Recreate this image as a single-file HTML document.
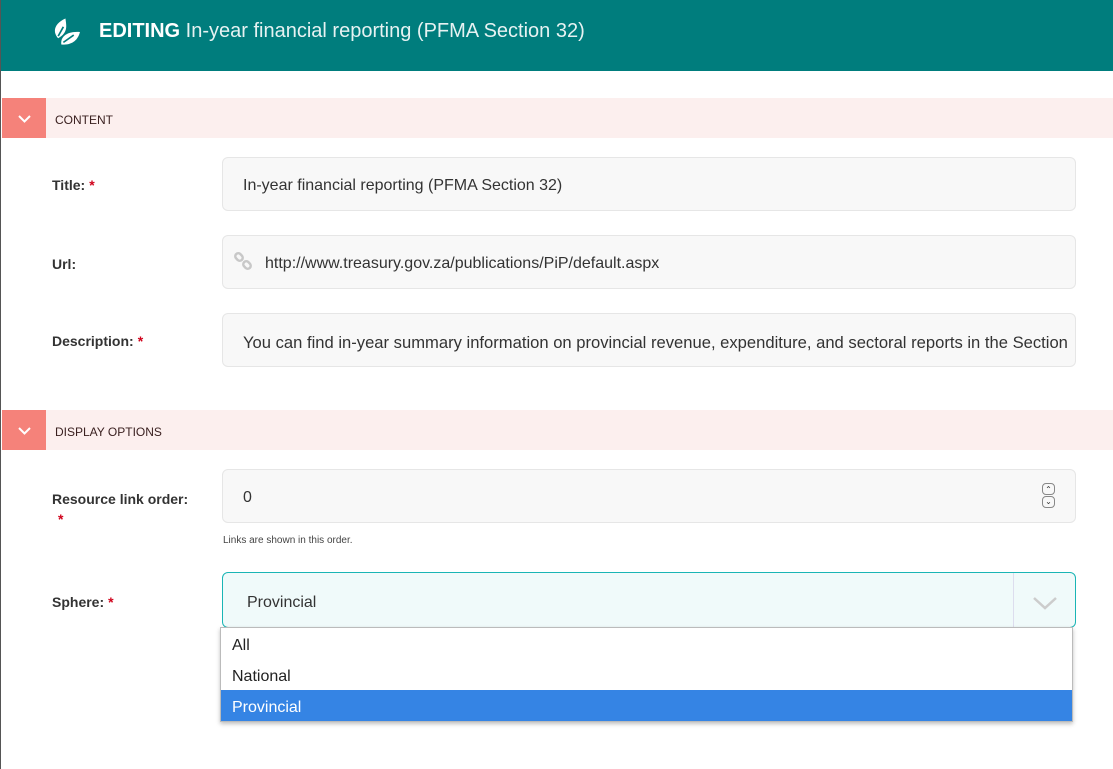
<!DOCTYPE html>
<html><head><style>
*{box-sizing:border-box;margin:0;padding:0}
body{width:1113px;height:769px;background:#fff;font-family:"Liberation Sans",sans-serif;position:relative;overflow:hidden}
.edge{position:absolute;left:0;top:0;width:1px;height:769px;background:#555}
.hdr{position:absolute;left:1px;top:0;width:1112px;height:71px;background:#007d7d;color:#fff}
.hdr .t{position:absolute;left:98px;top:20px;font-size:20px;color:#e6f2f2}
.hdr b{color:#fff}
.bar{position:absolute;left:2px;width:1111px;height:40px;background:#fcefee;font-size:12px;color:#3a2020}
.bar .c{position:absolute;left:0;top:0;width:44px;height:40px;background:#f5827a}
.bar span{position:absolute;left:53px;top:15px}
.lbl{position:absolute;left:52px;font-size:14px;font-weight:bold;color:#333}
.lbl i{color:#d0021b;font-style:normal;margin-left:4px}
.in{position:absolute;left:222px;width:854px;height:54px;background:#f8f8f8;border:1px solid #e6e6e6;border-radius:6px;font-size:16px;color:#333;padding:19px 0 0 20px;white-space:nowrap;overflow:hidden}
.dd{position:absolute;left:220px;top:627px;width:853px;height:95px;background:#fff;border:1px solid #bbb;box-shadow:0 2px 4px rgba(0,0,0,.25);font-size:16px;color:#222}
.dd div{height:31px;padding:9px 11px 0}
</style></head><body>
<div class="edge"></div>
<div class="hdr">
<svg style="position:absolute;left:52px;top:18px" width="28" height="28" viewBox="0 0 27 26"><path d="M4 18C-1 11 3 4 12 0C13 7 14 12 8 17L5 19Z" fill="#fff"/><path d="M8 25C7 18 13 12 26 13C24 21 18 26 8 25Z" fill="#fff"/><path d="M10 23L20 16" stroke="#007d7d" stroke-width="1.6"/><path d="M5 17L10 8" stroke="#007d7d" stroke-width="1.6"/></svg>
<div class="t"><b>EDITING</b> In-year financial reporting (PFMA Section 32)</div></div>
<div class="bar" style="top:98px"><div class="c"><svg style="position:absolute;left:16px;top:17px" width="13" height="8"><path d="M1 1L6.5 6.5L12 1" stroke="#fff" stroke-width="2" fill="none"/></svg></div><span>CONTENT</span></div>
<div class="lbl" style="top:177px">Title:<i>*</i></div>
<div class="in" style="top:157px">In-year financial reporting (PFMA Section 32)</div>
<div class="lbl" style="top:256px">Url:</div>
<div class="in" style="top:235px;padding-left:42px">http://www.treasury.gov.za/publications/PiP/default.aspx
<svg style="position:absolute;left:10px;top:16px" width="22" height="22" viewBox="0 0 22 22"><rect x="2" y="2" width="8" height="6" rx="3" transform="rotate(45 6 5)" fill="none" stroke="#c8c8c8" stroke-width="2.5"/><rect x="10" y="10" width="8" height="6" rx="3" transform="rotate(45 14 13)" fill="none" stroke="#c8c8c8" stroke-width="2.5"/></svg></div>
<div class="lbl" style="top:333px">Description:<i>*</i></div>
<div class="in" style="top:313px;font-size:16.6px">You can find in-year summary information on provincial revenue, expenditure, and sectoral reports in the Section</div>
<div class="bar" style="top:410px"><div class="c"><svg style="position:absolute;left:16px;top:17px" width="13" height="8"><path d="M1 1L6.5 6.5L12 1" stroke="#fff" stroke-width="2" fill="none"/></svg></div><span>DISPLAY OPTIONS</span></div>
<div class="lbl" style="top:489px;line-height:20px">Resource link order:<br><i style="margin-left:6px">*</i></div>
<div class="in" style="top:469px">0
<div style="position:absolute;left:819px;top:13px;width:13px;height:12px;border:1px solid #888;border-radius:4px;font-size:8px;text-align:center;line-height:11px">&#8963;</div>
<div style="position:absolute;left:819px;top:26px;width:13px;height:12px;border:1px solid #888;border-radius:4px;font-size:8px;text-align:center;line-height:9px">&#8964;</div></div>
<div style="position:absolute;left:223px;top:535px;font-size:10px;color:#444">Links are shown in this order.</div>
<div class="lbl" style="top:594px">Sphere:<i>*</i></div>
<div class="in" style="top:572px;height:56px;background:#f0fafa;border-color:#1ab5b5;padding:21px 0 0 24px">Provincial
<div style="position:absolute;left:790px;top:0;width:1px;height:56px;background:#dde"></div>
<svg style="position:absolute;left:809px;top:23px" width="26" height="14"><path d="M2 2L13 12L24 2" stroke="#ccc" stroke-width="2.5" fill="none"/></svg></div>
<div class="dd"><div>All</div><div>National</div><div style="background:#3584e4;color:#fff">Provincial</div></div>
</body></html>
